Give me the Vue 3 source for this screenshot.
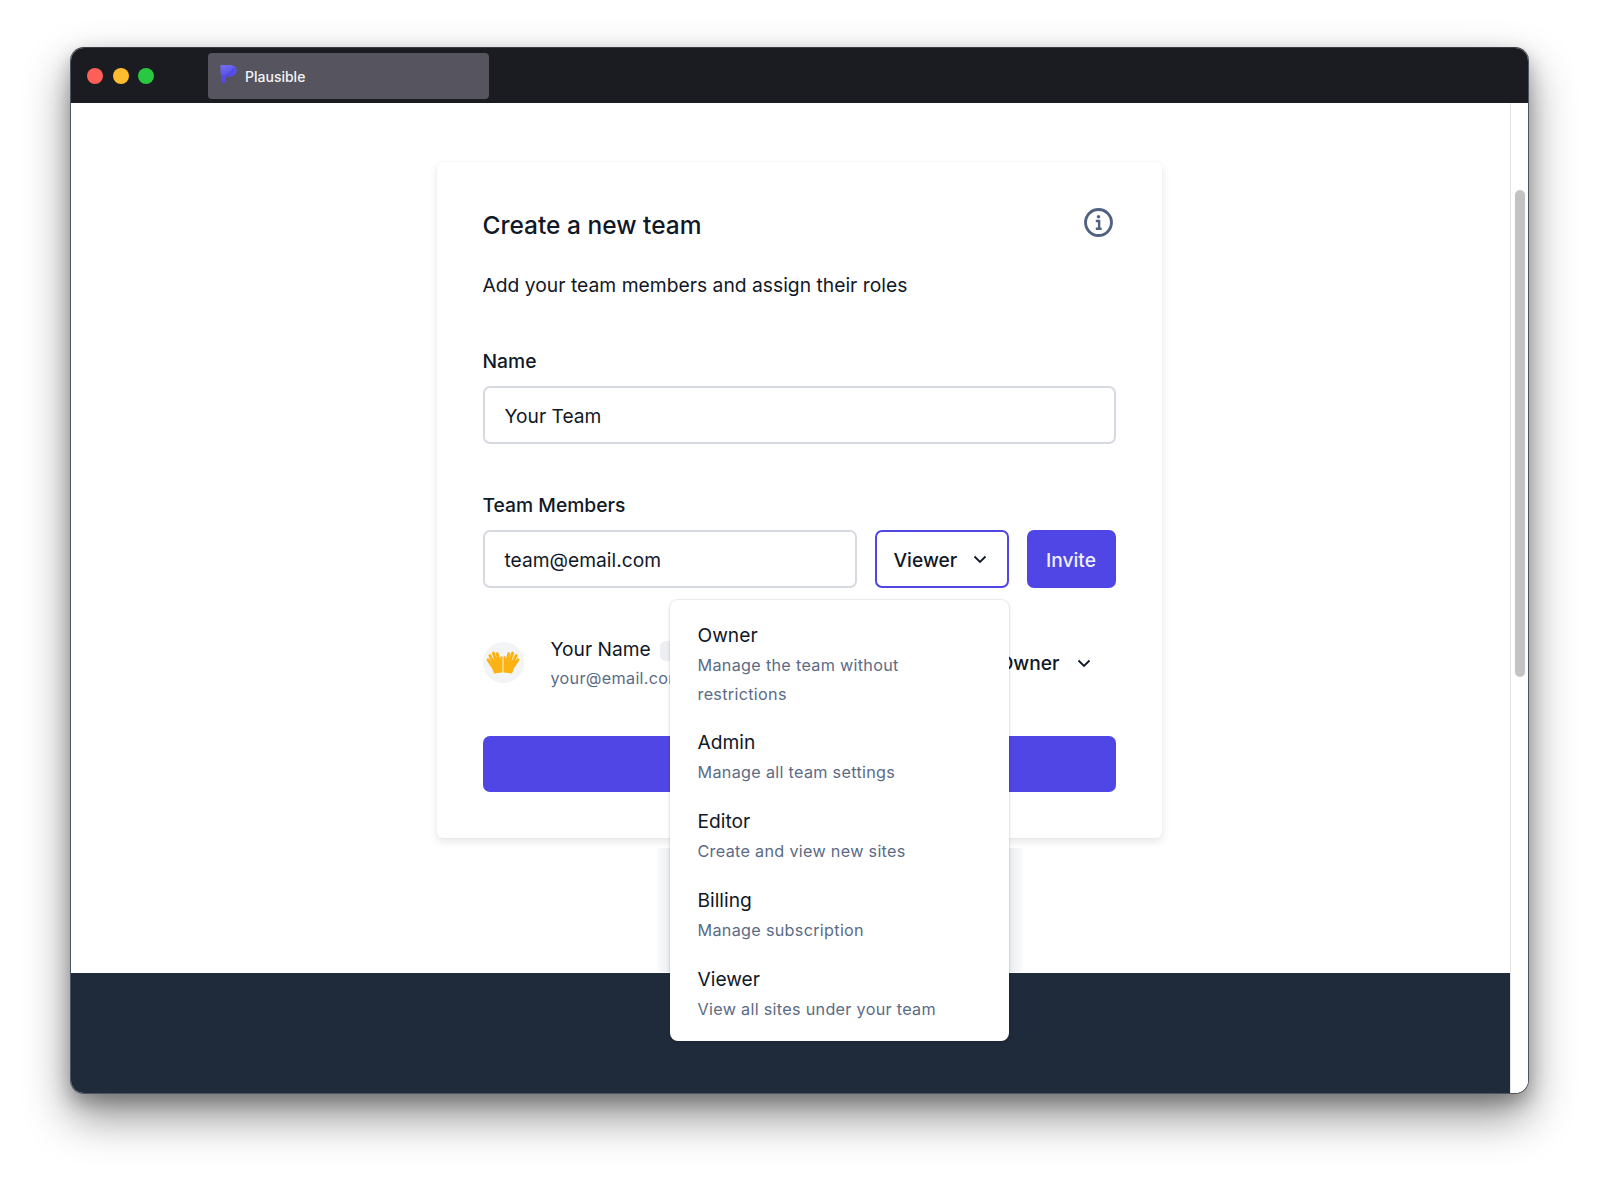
<template>
  <div class="page">
    <div class="window">
      <header class="titlebar">
        <div class="lights">
          <span class="light red"></span>
          <span class="light yellow"></span>
          <span class="light green"></span>
        </div>
        <div class="tab">
          <svg class="logo" viewBox="0 0 18 20" xmlns="http://www.w3.org/2000/svg">
            <defs>
              <linearGradient id="logo-fill" x1="0" y1="0" x2="0.4" y2="1">
                <stop offset="0" stop-color="#7471f2" />
                <stop offset="1" stop-color="#4a3fe0" />
              </linearGradient>
            </defs>
            <path d="M0.5 0.5 L10.5 0.5 C14.8 0.5 17.6 3 17.6 6.4 C17.6 10 14.6 12.8 10.6 12.8 L6.5 12.8 L6.5 17 C6.5 18.6 5.2 19.8 3.6 19.8 L1.4 19.8 L1.4 9.5 L0.5 9.5 Z" fill="url(#logo-fill)" />
            <path d="M1.4 12 C6 11.5 11 9 13.5 3 L16.5 4 C15 9 11 12 6.5 12.8 L1.4 15 Z" fill="#4f46e5" opacity="0.7" />
          </svg>
          <span class="tab-title">Plausible</span>
        </div>
      </header>

      <div class="viewport">
        <main class="content">
          <section class="stage">
            <div class="card">
              <div class="card-head">
                <h1>Create a new team</h1>
                <svg class="info" viewBox="0 0 28 28" fill="none" xmlns="http://www.w3.org/2000/svg">
                  <circle cx="14" cy="14" r="12.5" stroke="#4f6282" stroke-width="2.8" />
                  <circle cx="14" cy="8.4" r="1.7" fill="#4f6282" />
                  <path d="M11.4 12.6H14.6V19.8M11.4 20H17" stroke="#4f6282" stroke-width="2.3" />
                </svg>
              </div>
              <p class="subtitle">Add your team members and assign their roles</p>

              <label class="field-label name-label">Name</label>
              <div class="input">Your Team</div>

              <label class="field-label members-label">Team Members</label>
              <div class="invite-row">
                <div class="input email">team@email.com</div>
                <div class="select">
                  <span>Viewer</span>
                  <svg class="chev" viewBox="0 0 14 9" fill="none" xmlns="http://www.w3.org/2000/svg">
                    <path d="M1.5 1.5L7 7L12.5 1.5" stroke="#111827" stroke-width="1.8" />
                  </svg>
                </div>
                <button class="invite">Invite</button>
              </div>

              <div class="member">
                <div class="avatar">
                  <svg viewBox="0 0 36 26" xmlns="http://www.w3.org/2000/svg">
                    <g id="hand" fill="#fbb313" stroke="#fbb313" stroke-linecap="round" stroke-width="3.2">
                      <path d="M4.5 13 L16 11 L16.6 23.5 L9 24.5 Z" stroke-width="2" stroke-linejoin="round" />
                      <path d="M6 17L1.8 10.5M7.5 13.5L3.8 6M10.5 12L7.6 3.4M13.5 12L11.8 4" fill="none" />
                      <path d="M15.8 20L16.3 8" fill="none" stroke-width="2.6" />
                    </g>
                    <use href="#hand" transform="matrix(-1 0 0 1 36 0)" />
                  </svg>
                </div>
                <div class="member-info">
                  <div class="member-name">Your Name <span class="you">You</span></div>
                  <div class="member-email">your@email.com</div>
                </div>
                <div class="member-role">
                  <span>Owner</span>
                  <svg class="chev" viewBox="0 0 14 9" fill="none" xmlns="http://www.w3.org/2000/svg">
                    <path d="M1.5 1.5L7 7L12.5 1.5" stroke="#111827" stroke-width="1.8" />
                  </svg>
                </div>
              </div>

              <button class="create"></button>

              <div class="menu-shadow"></div>
              <ul class="menu">
                <li v-for="role in roles" :key="role.name" class="menu-item">
                  <div class="role-name">{{ role.name }}</div>
                  <div class="role-desc">{{ role.desc }}</div>
                </li>
              </ul>
            </div>
          </section>
          <footer class="footer"></footer>
        </main>
        <aside class="scrollbar"><div class="thumb"></div></aside>
      </div>
    </div>
  </div>
</template>

<script setup>
const roles = [
  { name: 'Owner', desc: 'Manage the team without restrictions' },
  { name: 'Admin', desc: 'Manage all team settings' },
  { name: 'Editor', desc: 'Create and view new sites' },
  { name: 'Billing', desc: 'Manage subscription' },
  { name: 'Viewer', desc: 'View all sites under your team' }
]
</script>

<style>
html,
body {
  margin: 0;
  background: #fff;
}
</style>

<style scoped>
* {
  box-sizing: border-box;
}

.page {
  width: 1600px;
  height: 1188px;
  padding: 47px 71px 94px 70px;
  font-family: Inter, "Liberation Sans", sans-serif;
  color: #111827;
  overflow: hidden;
}

.window {
  height: 100%;
  display: flex;
  flex-direction: column;
  border-radius: 14px;
  border: 1px solid #4b5563;
  border-top-color: #3d3d46;
  background: #fff;
  position: relative;
  box-shadow: 0 22px 46px rgba(0, 0, 0, 0.45), 0 8px 18px rgba(0, 0, 0, 0.25);
}

.titlebar {
  height: 55px;
  flex-shrink: 0;
  display: flex;
  align-items: center;
  padding: 0 0 0 16px;
  background: #1b1b22;
  border-radius: 13px 13px 0 0;
}

.lights {
  display: flex;
  gap: 9.5px;
  width: 121px;
  margin-top: 1px;
}

.light {
  width: 16px;
  height: 16px;
  border-radius: 50%;
}

.red { background: #fe5f57; }
.yellow { background: #febc2e; }
.green { background: #28c840; }

.tab {
  width: 281px;
  height: 46px;
  margin-top: 1px;
  display: flex;
  align-items: center;
  padding-left: 12px;
  gap: 8px;
  background: #55545f;
  border-radius: 4px;
}

.logo {
  width: 17px;
  height: 20px;
  margin-top: -4px;
}

.tab-title {
  color: #f3f3f5;
  font-size: 14px;
  font-weight: 500;
}

.viewport {
  flex: 1;
  min-height: 0;
  display: flex;
  border-radius: 0 0 13px 13px;
  overflow: hidden;
}

.content {
  flex: 1;
  display: flex;
  flex-direction: column;
  min-width: 0;
}

.stage {
  flex: 1;
  display: flex;
  justify-content: center;
  padding: 59px 0 0 17px;
  background: #fff;
}

.card {
  position: relative;
  width: 725px;
  height: 676px;
  padding: 47px 46px 0;
  background: #fff;
  border-radius: 6px;
  box-shadow: 0 4px 8px rgba(17, 24, 39, 0.1), 0 0 2px rgba(17, 24, 39, 0.06);
}

.card-head {
  display: flex;
  justify-content: space-between;
  align-items: flex-start;
  height: 40px;
}

h1 {
  margin: 0;
  font-size: 24.5px;
  line-height: 32px;
  font-weight: 500;
}

.info {
  width: 29px;
  height: 29px;
  margin: -1.5px 3px 0 0;
}

.subtitle {
  margin: 22px 0 0;
  font-size: 19.3px;
  line-height: 28px;
}

.field-label {
  display: block;
  font-size: 19.3px;
  line-height: 28px;
  font-weight: 500;
}

.name-label { margin-top: 48px; }
.members-label { margin-top: 47px; }

.input {
  height: 58px;
  margin-top: 11px;
  padding: 2px 20px 0;
  display: flex;
  align-items: center;
  font-size: 19.2px;
  background: #fff;
  border: 2px solid #d6dae0;
  border-radius: 7px;
}

.invite-row {
  display: flex;
  margin-top: 11px;
  gap: 18px;
}

.email {
  width: 374px;
  margin-top: 0;
}

.select {
  width: 134px;
  height: 58px;
  padding: 1px 20px 0 17px;
  display: flex;
  align-items: center;
  justify-content: space-between;
  font-size: 19.2px;
  font-weight: 500;
  border: 2px solid #4f46e5;
  border-radius: 7px;
}

.chev {
  width: 14px;
  height: 9px;
}

.invite {
  flex: 1;
  height: 58px;
  padding: 1px 0 0;
  border: none;
  border-radius: 7px;
  background: #4f46e5;
  color: #eef0ff;
  font: 500 19.2px Inter, sans-serif;
}

.member {
  display: flex;
  align-items: center;
  margin-top: 40px;
  height: 70px;
}

.avatar {
  width: 41px;
  height: 41px;
  flex-shrink: 0;
  margin-top: -2px;
  display: flex;
  align-items: center;
  justify-content: center;
  border-radius: 50%;
  background: #f3f4f6;
}

.avatar svg {
  width: 34px;
  height: 24px;
}

.member-info {
  margin-left: 27px;
  flex: 1;
}

.member-name {
  font-size: 19.2px;
  line-height: 28px;
  white-space: nowrap;
}

.you {
  display: inline-block;
  margin-left: 4px;
  padding: 0 10px;
  font-size: 14px;
  line-height: 20px;
  background: #eceef2;
  border-radius: 6px;
}

.member-email {
  margin-top: 2px;
  font-size: 16.2px;
  line-height: 26px;
  letter-spacing: 0.3px;
  color: #5b6b86;
}

.member-role {
  display: flex;
  align-items: center;
  gap: 17px;
  padding-right: 25px;
  font-size: 19.2px;
  font-weight: 500;
}

.create {
  display: block;
  width: 100%;
  height: 56px;
  margin-top: 38px;
  border: none;
  border-radius: 7px;
  background: #4f46e5;
}

.menu-shadow {
  position: absolute;
  left: 220px;
  top: 686px;
  width: 366px;
  height: 124px;
  background: linear-gradient(90deg, #fbfbfc, #ebedf1 13px, #ebedf1 calc(100% - 13px), #fbfbfc);
}

.menu {
  position: absolute;
  left: 233px;
  top: 438px;
  width: 339px;
  height: 441px;
  margin: 0;
  padding: 10px 28px 0;
  list-style: none;
  background: #fff;
  border-radius: 8px;
  box-shadow: 0 0 0 1px rgba(17, 24, 39, 0.05), 0 1px 4px rgba(17, 24, 39, 0.12);
}

.menu-item {
  padding-top: 11px;
  padding-bottom: 9.4px;
}

.role-name {
  font-size: 19.2px;
  line-height: 28px;
}

.role-desc {
  margin-top: 2px;
  font-size: 16.2px;
  line-height: 28.5px;
  letter-spacing: 0.3px;
  color: #5b6b86;
}

.footer {
  height: 120px;
  flex-shrink: 0;
  background: #1f2a3b;
}

.scrollbar {
  width: 18px;
  flex-shrink: 0;
  background: #fff;
  border-left: 1px solid #e4e4e4;
  padding: 87px 3px 0 4px;
}

.thumb {
  height: 487px;
  border-radius: 5px;
  background: #c2c3c5;
}
</style>
